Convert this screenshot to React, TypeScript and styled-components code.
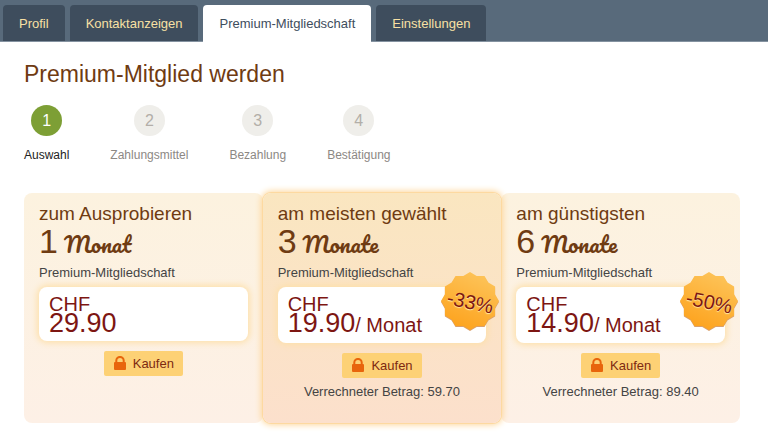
import React from 'react';
import styled, { createGlobalStyle } from 'styled-components';

const GlobalStyle = createGlobalStyle`
  *, *::before, *::after { box-sizing: border-box; }
  body {
    margin: 0;
    background: #fff;
    color: #444;
    font: 13px/16px "Liberation Sans", Arial, sans-serif;
  }
  h1, h2, p, ol { margin: 0; padding: 0; font-weight: normal; }
`;

const TabBar = styled.nav`
  display: flex;
  align-items: flex-end;
  gap: 5px;
  padding: 5px 3px 0;
  background: #586a7b;
  border-bottom: 1px solid #8492a0;
`;

const Tab = styled.a<{ $active?: boolean }>`
  padding: 11px 16px 9px;
  margin-bottom: ${({ $active }) => ($active ? '-1px' : '0')};
  padding-bottom: ${({ $active }) => ($active ? '10px' : '9px')};
  border-radius: 4px 4px 0 0;
  background: ${({ $active }) => ($active ? '#fff' : '#3e4d5d')};
  color: ${({ $active }) => ($active ? '#3e4d5d' : '#f8e0a4')};
  text-decoration: none;
  white-space: nowrap;
`;

const Page = styled.main`
  padding: 18px 28px 16px 24px;
`;

const Title = styled.h1`
  color: #6f3b12;
  font-size: 23px;
  line-height: 28px;
`;

const Steps = styled.ol`
  display: flex;
  gap: 41px;
  margin-top: 17px;
  list-style: none;
`;

const Step = styled.li<{ $current?: boolean }>`
  display: flex;
  flex-direction: column;
  align-items: center;
  gap: 11px;
  color: ${({ $current }) => ($current ? '#222' : '#8c8884')};
  font-size: 12px;
`;

const StepNumber = styled.span<{ $current?: boolean }>`
  width: 31px;
  height: 31px;
  border-radius: 50%;
  background: ${({ $current }) => ($current ? '#7d9f35' : '#efeeea')};
  color: ${({ $current }) => ($current ? '#fff' : '#b3aea8')};
  font-size: 16px;
  line-height: 31px;
  text-align: center;
`;

const Plans = styled.div`
  display: grid;
  grid-template-columns: repeat(3, 1fr);
  margin-top: 30px;
`;

const PlanCard = styled.section<{ $featured?: boolean }>`
  position: relative;
  z-index: ${({ $featured }) => ($featured ? 1 : 0)};
  min-height: 230px;
  padding: 10px 15px 20px;
  border-radius: 8px;
  background: ${({ $featured }) =>
    $featured
      ? 'linear-gradient(#fae6c0, #fce0cc)'
      : 'linear-gradient(#fcf2df, #fdf0e6)'};
  box-shadow: ${({ $featured }) =>
    $featured ? '0 0 0 1px #fdd9a0, 0 0 6px 2px #fdd79c' : 'none'};
`;

const PlanTitle = styled.h2`
  color: #6f3b12;
  font-size: 19px;
  line-height: 22px;
`;

const Duration = styled.p`
  display: flex;
  align-items: baseline;
  gap: 6px;
  height: 32px;
  color: #6f3b12;
  font-size: 34px;
  line-height: 32px;
`;

const Period = styled.span`
  font: 22px/32px Pacifico, "Kaushan Script", cursive;
`;

const Product = styled.p`
  margin-top: 8px;
`;

const PriceBox = styled.div<{ $monthly?: boolean }>`
  position: relative;
  min-height: ${({ $monthly }) => ($monthly ? '56px' : '54px')};
  margin-top: 6px;
  padding: 8px 10px 0;
  border-radius: 8px;
  background: #fff;
  box-shadow: 0 0 6px 2px #fde0ab;
  color: #7d1612;
  font-size: 20px;
  line-height: 18px;
`;

const Amount = styled.p`
  line-height: 20px;
`;

const Figure = styled.span`
  font-size: 27px;
`;

const Badge = styled.div`
  position: absolute;
  top: -15px;
  right: -14px;
  display: grid;
  place-items: center;
  width: 60px;
  height: 60px;
`;

const BadgeShape = styled.svg`
  grid-area: 1 / 1;
  width: 60px;
  height: 60px;
`;

const BadgeText = styled.span`
  grid-area: 1 / 1;
  z-index: 1;
  transform: rotate(12deg);
  color: #7d1612;
  text-shadow: 0 1px 1px #fff0b0;
`;

const Checkout = styled.div`
  display: flex;
  flex-direction: column;
  align-items: center;
  gap: 6px;
  margin-top: 10px;
`;

const BuyButton = styled.button`
  display: flex;
  align-items: center;
  gap: 7px;
  height: 25px;
  padding: 0 9px 0 10px;
  border: 0;
  border-radius: 2px;
  background: #fdd175;
  color: #7d2a12;
  font: inherit;
  cursor: pointer;
`;

const tabs = ['Profil', 'Kontaktanzeigen', 'Premium-Mitgliedschaft', 'Einstellungen'];
const steps = ['Auswahl', 'Zahlungsmittel', 'Bezahlung', 'Bestätigung'];

type Plan = {
  title: string;
  count: number;
  period: string;
  price: string;
  total?: string;
  discount?: string;
  featured?: boolean;
};

const plans: Plan[] = [
  { title: 'zum Ausprobieren', count: 1, period: 'Monat', price: '29.90' },
  { title: 'am meisten gewählt', count: 3, period: 'Monate', price: '19.90', total: '59.70', discount: '-33%', featured: true },
  { title: 'am günstigsten', count: 6, period: 'Monate', price: '14.90', total: '89.40', discount: '-50%' },
];

const starPoints = Array.from({ length: 24 }, (_, i) => {
  const radius = i % 2 === 0 ? 29 : 26;
  const angle = (i * Math.PI) / 12;
  return `${(30 + radius * Math.sin(angle)).toFixed(1)},${(29 - radius * Math.cos(angle)).toFixed(1)}`;
}).join(' ');

function LockIcon() {
  return (
    <svg width="12" height="15" viewBox="0 0 12 15" aria-hidden="true">
      <path d="M2.3 7V4.6a3.7 3.7 0 0 1 7.4 0V7" fill="none" stroke="#e8650c" strokeWidth="2" />
      <rect y="6" width="12" height="8" rx="1" fill="#e8650c" />
    </svg>
  );
}

function DiscountBadge({ label, id }: { label: string; id: string }) {
  return (
    <Badge>
      <BadgeShape viewBox="0 0 60 60" aria-hidden="true">
        <defs>
          <linearGradient id={id} x1="0.7" y1="0" x2="0.3" y2="1">
            <stop offset="0" stopColor="#fdc45a" />
            <stop offset="1" stopColor="#fda21c" />
          </linearGradient>
        </defs>
        <polygon points={starPoints} transform="translate(0 1)" fill="#d9a06c" />
        <polygon points={starPoints} fill={`url(#${id})`} />
      </BadgeShape>
      <BadgeText>{label}</BadgeText>
    </Badge>
  );
}

export default function App() {
  return (
    <>
      <GlobalStyle />
      <TabBar>
        {tabs.map((tab, i) => (
          <Tab key={tab} href="#" $active={i === 2} aria-current={i === 2 ? 'page' : undefined}>
            {tab}
          </Tab>
        ))}
      </TabBar>
      <Page>
        <Title>Premium-Mitglied werden</Title>
        <Steps>
          {steps.map((step, i) => (
            <Step key={step} $current={i === 0}>
              <StepNumber $current={i === 0}>{i + 1}</StepNumber>
              {step}
            </Step>
          ))}
        </Steps>
        <Plans>
          {plans.map((plan) => (
            <PlanCard key={plan.title} $featured={plan.featured}>
              <PlanTitle>{plan.title}</PlanTitle>
              <Duration>
                {plan.count}
                <Period>{plan.period}</Period>
              </Duration>
              <Product>Premium-Mitgliedschaft</Product>
              <PriceBox $monthly={!!plan.total}>
                <p>CHF</p>
                <Amount>
                  <Figure>{plan.price}</Figure>
                  {plan.total && '/ Monat'}
                </Amount>
                {plan.discount && <DiscountBadge label={plan.discount} id={`badge-${plan.count}`} />}
              </PriceBox>
              <Checkout>
                <BuyButton type="button">
                  <LockIcon />
                  Kaufen
                </BuyButton>
                {plan.total && <p>Verrechneter Betrag: {plan.total}</p>}
              </Checkout>
            </PlanCard>
          ))}
        </Plans>
      </Page>
    </>
  );
}
